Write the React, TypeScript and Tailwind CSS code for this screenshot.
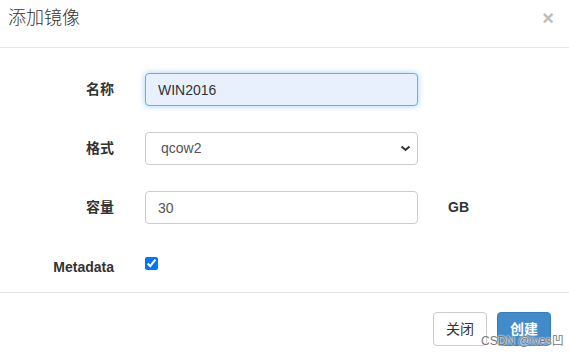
import React from "react";

export default function App() {
  const font = "font-['Liberation_Sans','Noto_Sans_CJK_SC',sans-serif]";

  return (
    <div className={`relative w-[569px] h-[356px] bg-white text-[#333] overflow-hidden ${font}`}>
      {/* Header */}
      <div className="flex items-start justify-between h-[48px] border-b border-[#e5e5e5] pl-[8px] pr-[15px] pt-[5px]">
        <h4 className="text-[18px] leading-[26px] font-light text-[#333]">添加镜像</h4>
        <span className="text-[#bcbcbc] text-[20px] font-bold leading-[20px] mt-[3px]">×</span>
      </div>

      {/* Body */}
      <div className="flex flex-col gap-[26px] pt-[25px] h-[245px] border-b border-[#e5e5e5]">
        <div className="flex items-center">
          <label className="w-[114px] text-right text-[14px] font-bold">名称</label>
          <input
            defaultValue="WIN2016"
            className="ml-[31px] w-[273px] h-[33px] px-[12px] text-[14px] text-[#333] bg-[#e8f0fe] border border-[#66afe9] rounded-[4px] shadow-[0_0_6px_rgba(102,175,233,0.6)] outline-none"
          />
        </div>

        <div className="flex items-center">
          <label className="w-[114px] text-right text-[14px] font-bold">格式</label>
          <div className="relative ml-[31px] w-[273px] h-[33px]">
            <select className="appearance-none w-full h-full pl-[15px] text-[14px] text-[#555] bg-white border border-[#ccc] rounded-[4px] outline-none">
              <option>qcow2</option>
            </select>
            <svg className="absolute right-[7px] top-[13px] pointer-events-none" width="11" height="7" viewBox="0 0 11 7">
              <path d="M1.5 1.5 L5.5 5 L9.5 1.5" fill="none" stroke="#333" strokeWidth="2" />
            </svg>
          </div>
        </div>

        <div className="flex items-center">
          <label className="w-[114px] text-right text-[14px] font-bold">容量</label>
          <input
            defaultValue="30"
            className="ml-[31px] w-[273px] h-[33px] px-[12px] text-[14px] text-[#555] bg-white border border-[#ccc] rounded-[4px] outline-none"
          />
          <span className="ml-[30px] text-[14px] font-bold">GB</span>
        </div>

        <div className="flex items-start">
          <label className="w-[114px] text-right text-[14px] font-bold mt-[7px]">Metadata</label>
          <input type="checkbox" defaultChecked className="ml-[31px] mt-[7px] w-[13px] h-[13px] accent-[#0075ff]" />
        </div>
      </div>

      {/* Footer */}
      <div className="flex justify-end gap-[10px] pt-[19px] pr-[18px]">
        <button className="w-[54px] h-[34px] text-[14px] text-[#333] bg-white border border-[#ccc] rounded-[4px]">关闭</button>
        <button className="w-[54px] h-[34px] text-[14px] font-bold text-white bg-[#428bca] border border-[#357ebd] rounded-[4px]">创建</button>
      </div>

      {/* Watermark */}
      <span className="absolute left-[481px] top-[332px] text-[12px] text-[#777] [text-shadow:0_0_2px_#fff,0_0_2px_#fff]">
        CSDN @ives凹
      </span>
    </div>
  );
}
